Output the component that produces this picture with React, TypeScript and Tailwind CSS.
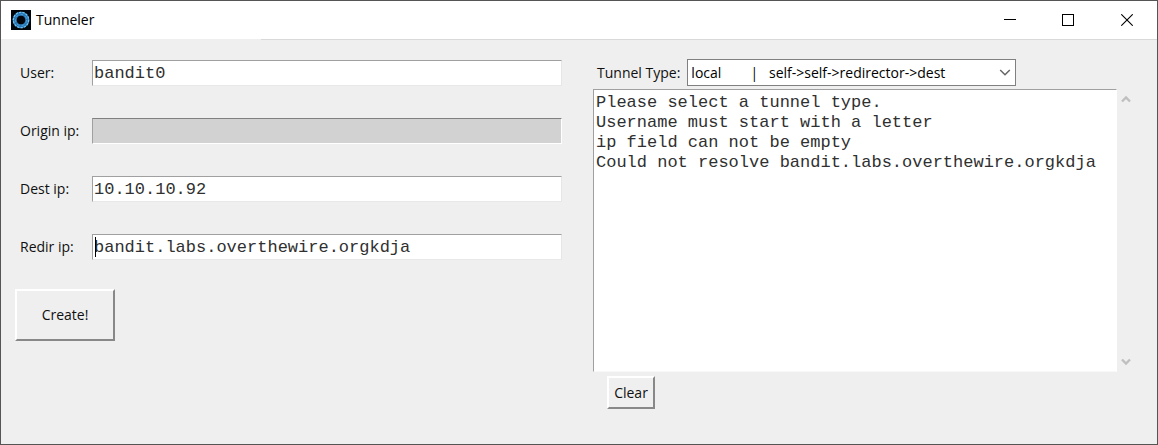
import { useState } from "react";

type FieldProps = {
  id: string;
  label: string;
  value: string;
  disabled?: boolean;
  focused?: boolean;
  onChange: (value: string) => void;
};

function Field({ id, label, value, disabled, focused, onChange }: FieldProps) {
  return (
    <div className="flex h-[26px] items-center">
      <label htmlFor={id} className="w-[72px] shrink-0 whitespace-nowrap">
        {label}
      </label>
      <div className="relative h-full min-w-0 flex-1">
        <input
          id={id}
          type="text"
          value={value}
          disabled={disabled}
          spellCheck={false}
          onChange={(e) => onChange(e.target.value)}
          className="block h-full w-full border border-t-[#a0a0a0] border-r-[#e6e6e6] border-b-[#e8e8e8] border-l-[#a0a0a0] bg-white px-px font-['Liberation_Mono',monospace] text-[17px] leading-5 text-[#303030] outline-none disabled:border-t-[#808080] disabled:border-r-white disabled:border-b-white disabled:bg-[#d2d2d2]"
        />
        {focused && <span className="absolute top-[3px] left-[3px] h-5 w-px bg-black" />}
      </div>
    </div>
  );
}

function TitleIcon() {
  return (
    <svg viewBox="0 0 20 20" className="size-5" aria-hidden="true">
      <rect width="20" height="20" fill="#02050a" />
      <circle cx="10" cy="10" r="6.3" fill="none" stroke="#2877b4" strokeWidth="4" />
      <circle cx="10" cy="10" r="7.7" fill="none" stroke="#6fc0ee" strokeWidth="1.3" strokeDasharray="2.4 1" />
      <circle cx="10" cy="10" r="5.6" fill="none" stroke="#4b9dd6" strokeWidth="1" strokeDasharray="3 2" />
      <circle cx="10" cy="10" r="3.9" fill="#02050a" />
    </svg>
  );
}

const raised =
  "border-2 border-t-white border-l-white border-r-[#888888] border-b-[#888888] bg-[#efefef]";

const initialLog = [
  "Please select a tunnel type.",
  "Username must start with a letter",
  "ip field can not be empty",
  "Could not resolve bandit.labs.overthewire.orgkdja",
].join("\n");

export default function App() {
  const [user, setUser] = useState("bandit0");
  const [origin, setOrigin] = useState("");
  const [dest, setDest] = useState("10.10.10.92");
  const [redir, setRedir] = useState("bandit.labs.overthewire.orgkdja");
  const [log, setLog] = useState(initialLog);

  return (
    <div className="flex min-h-screen flex-col border border-[#555555] bg-[#efefef] font-['Open_Sans','Noto_Sans',sans-serif] text-[14px] leading-5 text-[#101010]">
      <header className="flex h-[38px] items-center bg-white pl-[10px]">
        <TitleIcon />
        <h1 className="flex-1 pl-[5px] text-black">Tunneler</h1>
        <button type="button" aria-label="Minimize" className="grid h-full w-[58px] place-items-center">
          <svg viewBox="0 0 12 12" className="size-3" shapeRendering="crispEdges">
            <path d="M0 5.5H12" stroke="#000" />
          </svg>
        </button>
        <button type="button" aria-label="Maximize" className="grid h-full w-[58px] place-items-center">
          <svg viewBox="0 0 12 12" className="size-3" shapeRendering="crispEdges">
            <rect x=".5" y=".5" width="11" height="11" fill="none" stroke="#000" />
          </svg>
        </button>
        <button type="button" aria-label="Close" className="grid h-full w-[60px] place-items-center">
          <svg viewBox="0 0 12 12" className="size-3">
            <path d="M.3 .3L11.7 11.7M11.7 .3L.3 11.7" stroke="#000" strokeWidth="1.1" />
          </svg>
        </button>
      </header>
      <div className="ml-[260px] h-px bg-[#d9d9d9]" />

      <main className="grid flex-1 grid-cols-2 gap-x-[31px] pt-[19px] pr-[17px] pb-[35px] pl-[14px]">
        <form className="flex flex-col items-start" onSubmit={(e) => e.preventDefault()}>
          <div className="flex w-full flex-col gap-8 pt-px pl-[5px]">
            <Field id="user" label="User:" value={user} onChange={setUser} />
            <Field id="origin" label="Origin ip:" value={origin} onChange={setOrigin} disabled />
            <Field id="dest" label="Dest ip:" value={dest} onChange={setDest} />
            <Field id="redir" label="Redir ip:" value={redir} onChange={setRedir} focused />
          </div>
          <button type="submit" className={`mt-[29px] h-[52px] w-[100px] ${raised}`}>
            Create!
          </button>
        </form>

        <section className="flex flex-col items-start">
          <div className="flex h-[27px] items-center gap-[7px] pl-1">
            <label htmlFor="type" className="whitespace-nowrap">
              Tunnel Type:
            </label>
            <div className="relative h-full">
              <select
                id="type"
                className="h-full w-[329px] appearance-none border border-[#808080] bg-white pr-6 pl-[3px] text-black outline-none"
              >
                <option>{"local\u00a0\u00a0\u00a0\u00a0\u00a0\u00a0\u00a0\u00a0|\u00a0\u00a0\u00a0self->self->redirector->dest"}</option>
              </select>
              <svg viewBox="0 0 12 8" className="pointer-events-none absolute top-[10px] right-[5px] h-2 w-3" fill="none">
                <path d="M1.2 1L6 5.8L10.8 1" stroke="#666" strokeWidth="1.5" />
              </svg>
            </div>
          </div>
          <div className="mt-[3px] flex w-full pr-[5px]">
            <textarea
              aria-label="Messages"
              readOnly
              value={log}
              className="block h-[283px] min-w-0 flex-1 resize-none overflow-hidden border border-t-[#a0a0a0] border-r-white border-b-[#f8f8f8] border-l-[#a0a0a0] bg-white px-0.5 pt-[3px] font-['Liberation_Mono',monospace] text-[17px] leading-5 text-[#303030] outline-none"
            />
            <div className="flex w-[18px] flex-col justify-between py-[6px]">
              <button type="button" aria-label="Scroll up" className="grid place-items-center">
                <svg viewBox="0 0 10 8" className="h-2 w-[10px]" fill="none">
                  <path d="M1 6.5L5 2.5L9 6.5" stroke="#bfbfbf" strokeWidth="2.4" />
                </svg>
              </button>
              <button type="button" aria-label="Scroll down" className="grid place-items-center">
                <svg viewBox="0 0 10 8" className="h-2 w-[10px]" fill="none">
                  <path d="M1 1.5L5 5.5L9 1.5" stroke="#bfbfbf" strokeWidth="2.4" />
                </svg>
              </button>
            </div>
          </div>
          <button type="button" onClick={() => setLog("")} className={`mt-1 ml-[14px] h-[33px] w-12 ${raised}`}>
            Clear
          </button>
        </section>
      </main>
    </div>
  );
}
